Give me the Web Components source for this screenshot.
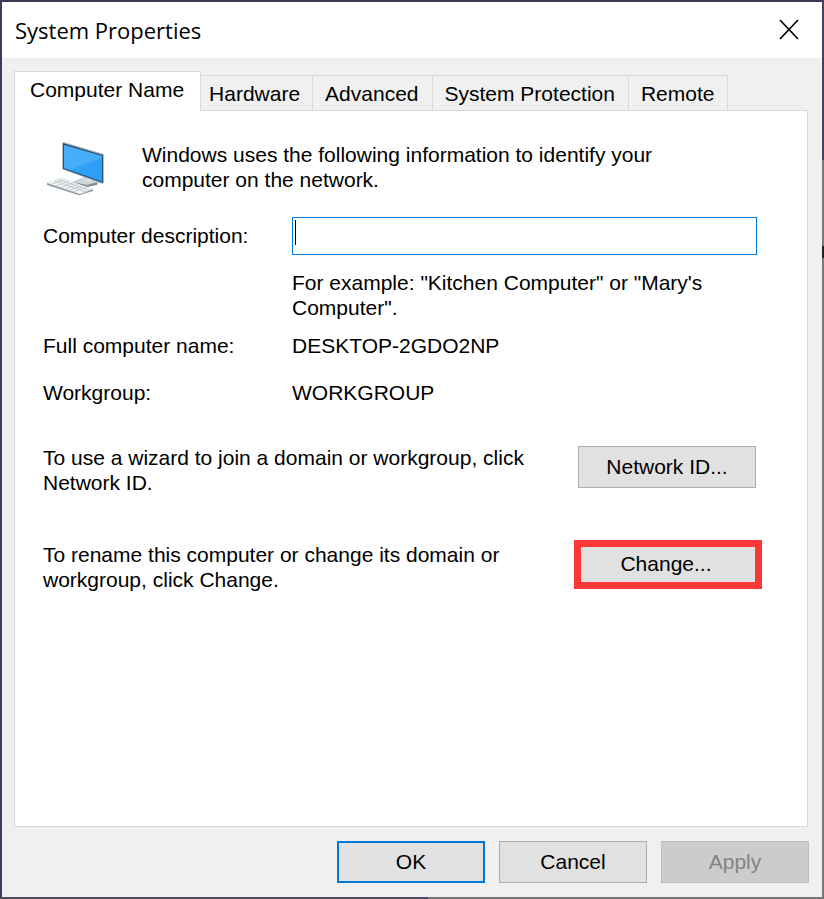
<!DOCTYPE html>
<html lang="en">
<head>
<meta charset="utf-8">
<title>System Properties</title>
<style>
html, body { margin: 0; height: 100%; }
body { font: 21px/25px "Liberation Sans", Arial, sans-serif; color: #000; }
</style>
</head>
<body>
<system-dialog heading="System Properties">
  <tab-strip slot="tabs" tabs="Computer Name,Hardware,Advanced,System Protection,Remote"></tab-strip>
  <computer-name-page></computer-name-page>
  <push-button slot="actions" label="OK" kind="default"></push-button>
  <push-button slot="actions" label="Cancel"></push-button>
  <push-button slot="actions" label="Apply" kind="disabled"></push-button>
</system-dialog>
<script>
class BaseElement extends HTMLElement {
  connectedCallback() {
    if (this.shadowRoot) return;
    this.attachShadow({ mode: 'open' }).innerHTML = this.render();
  }
}

customElements.define('push-button', class extends BaseElement {
  render() {
    const kind = this.getAttribute('kind') || 'normal';
    return `<style>
      :host { display: block; width: 148px; }
      button { box-sizing: border-box; display: block; width: 100%; height: 42px; padding: 0 0 2px; margin: 0;
        font: inherit; color: #000; background: #e1e1e1; border: 1px solid #adadad; border-radius: 0; }
      .default { border: 2px solid #0078d7; }
      .disabled { color: #838383; background: #ccc; border-color: #bfbfbf; }
      .marked { height: 49px; padding-right: 4px; border: 7px solid #fc3737; }
    </style>
    <button type="button" class="${kind}" ${kind === 'disabled' ? 'disabled' : ''}>${this.getAttribute('label')}</button>`;
  }
});

customElements.define('tab-strip', class extends BaseElement {
  render() {
    const tabs = this.getAttribute('tabs').split(',');
    return `<style>
      :host { display: block; }
      div { display: flex; align-items: flex-end; }
      button { box-sizing: border-box; height: 35px; padding: 0 13px 0 12px; margin: 0; font: inherit; color: #000;
        background: #f0f0f0; border: 1px solid #d9d9d9; border-width: 1px 1px 0 0; border-radius: 0; white-space: nowrap; }
      button[aria-selected="true"] { height: 40px; padding: 0 16px 4px 15px; margin-bottom: -1px; background: #fff;
        border-left-width: 1px; position: relative; }
      button[aria-selected="true"] + button { padding: 0 12px 0 8px; }
    </style>
    <div role="tablist">${tabs.map((t, i) => `<button type="button" role="tab" aria-selected="${i === 0}">${t}</button>`).join('')}</div>`;
  }
});

customElements.define('computer-icon', class extends BaseElement {
  render() {
    return `<style>:host { display: block; } svg { display: block; }</style>
    <svg width="60" height="56" viewBox="0 0 60 56" aria-hidden="true">
      <defs><linearGradient id="s" x1="0" y1="0" x2="1" y2="1"><stop offset="0" stop-color="#35a7f8"/><stop offset="1" stop-color="#2a9cf5"/></linearGradient></defs>
      <path d="M26 40 38 35 51 40 50 43 40 45 26 41Z" fill="#7f8b94"/>
      <path d="M26 40 38 35 51 40 40 43Z" fill="#cfd7db"/>
      <path d="M39 34 44 36 44 40 40 39Z" fill="#e2e7e9"/>
      <path d="M15 1 17 0 57 12 57 41 55 42 15 27Z" fill="#b3bec6"/>
      <path d="M16 1 56 13 56 41 16 27Z" fill="#2a5375"/>
      <path d="M17 3 55 14 55 39.500 17 26Z" fill="url(#s)"/>
      <path d="M17 3 55 14 55 16 22 28 17 26Z" fill="#61bbfa" opacity=".45"/>
      <path d="M0 41 14 36 46 47 46 49 33 53 31 53 0 43Z" fill="#929ca5"/>
      <path d="M0 41 14 36 46 47 33 52Z" fill="#f3f6f7"/>
      <g stroke="#b5bec4" stroke-width=".8" fill="none">
        <path d="M11 37.500 43 48.500M7 39 39 50"/>
        <path d="M18 37.500 4 42.500M22 39 9 44M27 40.500 14 45.500M31 42 18 47M36 43.500 22 48.500M40 45 26 50"/>
      </g>
    </svg>`;
  }
});

customElements.define('computer-name-page', class extends BaseElement {
  render() {
    return `<style>
      :host { display: block; padding: 31px 45px 28px 28px; }
      p { margin: 0; }
      .intro { display: grid; grid-template-columns: 99px minmax(0, 540px); }
      computer-icon { padding-left: 4px; height: 50px; }
      .fields { display: grid; grid-template-columns: 249px minmax(0, 1fr); align-items: center; padding: 25px 5px 0 0; }
      label { padding-bottom: 2px; }
      .box { position: relative; }
      input { box-sizing: border-box; display: block; width: 100%; height: 38px; padding: 0 4px; font: inherit;
        color: #000; background: #fff; border: 1px solid #0078d7; border-radius: 0; outline: 0; }
      .caret { position: absolute; left: 3px; top: 3px; width: 1px; height: 25px; background: #000; }
      .hint { grid-column: 2; margin: 15px 0 13px; max-width: 440px; }
      .group { margin-top: 22px; }
      .actions { display: grid; grid-template-columns: minmax(0, 1fr) 188px; padding-top: 37px; gap: 44px 0; }
      .actions p { max-width: 510px; padding-top: 3px; }
      .actions .top { width: 178px; height: 42px; margin: 4px 0 0 4px; }
      .actions .wide { width: 188px; height: 49px; margin-top: 1px; }
    </style>
    <div class="intro"><computer-icon></computer-icon><p>Windows uses the following information to identify your computer on the network.</p></div>
    <div class="fields">
      <label for="description">Computer description:</label>
      <div class="box"><input id="description" type="text"><span class="caret"></span></div>
      <p class="hint">For example: "Kitchen Computer" or "Mary's Computer".</p>
      <span>Full computer name:</span><span>DESKTOP-2GDO2NP</span>
      <span class="group">Workgroup:</span><span class="group">WORKGROUP</span>
    </div>
    <div class="actions">
      <p>To use a wizard to join a domain or workgroup, click Network ID.</p>
      <push-button class="top" label="Network ID..."></push-button>
      <p>To rename this computer or change its domain or workgroup, click Change.</p>
      <push-button class="wide" label="Change..." kind="marked"></push-button>
    </div>`;
  }
});

customElements.define('system-dialog', class extends BaseElement {
  render() {
    return `<style>
      :host { display: flex; box-sizing: border-box; min-height: 100%; padding: 2px;
        background:
          linear-gradient(#49405c 160px, #777 160px, #777 246px, #222 246px, #222 258px, #777 258px) right / 2px 100% no-repeat,
          linear-gradient(90deg, #504b60 52%, #777 52%) bottom / 100% 2px no-repeat,
          #403a56; }
      section { flex: 1; min-width: 0; display: flex; flex-direction: column; background: #f0f0f0; }
      header { display: flex; justify-content: space-between; align-items: center; height: 56px; padding: 0 22px 0 13px; background: #fff; }
      h1 { margin: 0; font: 400 22px/32px "Open Sans", "Noto Sans", sans-serif; }
      .close { display: block; padding: 0; border: 0; background: none; }
      svg { display: block; }
      main { flex: 1; display: flex; flex-direction: column; padding: 13px 14px 0 12px; }
      .panel { flex: 1; background: #fff; border: 1px solid #d9d9d9; }
      footer { display: flex; justify-content: flex-end; gap: 14px; padding: 14px 13px; }
    </style>
    <section role="dialog" aria-labelledby="heading">
      <header><h1 id="heading">${this.getAttribute('heading')}</h1>
        <button class="close" type="button" aria-label="Close"><svg width="22" height="22" viewBox="0 0 22 22"><path d="M2 1 20 20M20 1 2 20" stroke="#000" stroke-width="1.7" fill="none"/></svg></button></header>
      <main><slot name="tabs"></slot><div class="panel"><slot></slot></div></main>
      <footer><slot name="actions"></slot></footer>
    </section>`;
  }
});
</script>
</body>
</html>
